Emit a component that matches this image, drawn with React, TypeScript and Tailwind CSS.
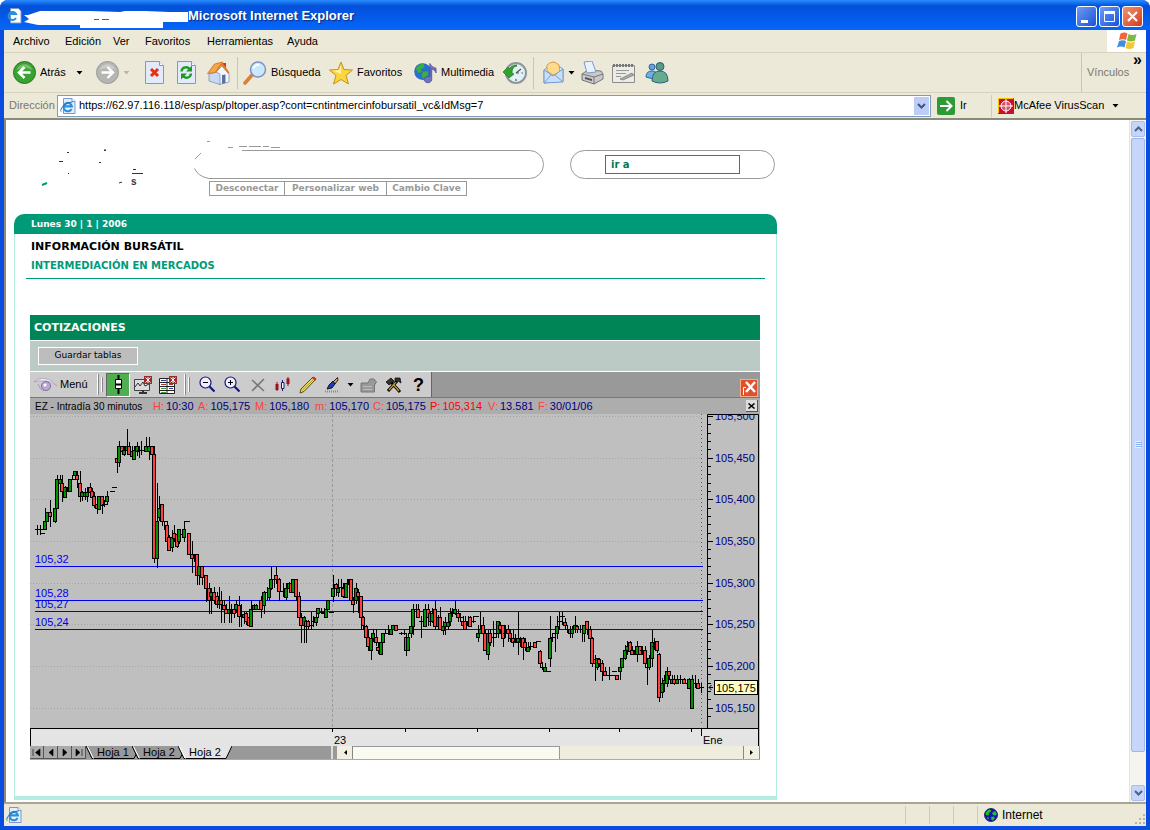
import type { ReactNode } from 'react';

type Candle = [number, number, number, number, number, string];

// x, high, body top, body bottom, low, colour (g = up, r = down, d = flat)
const candles: Candle[] = [
    [7, 115, 119, 119, 125, 'd'], [10, 115, 119, 119, 125, 'd'], [12, 123, 123, 123, 124, 'd'],
    [15, 98, 111, 119, 120, 'g'], [17, 102, 102, 111, 112, 'g'], [20, 90, 102, 106, 117, 'r'],
    [25, 98, 98, 111, 113, 'g'], [30, 65, 69, 73, 76, 'g'], [27, 65, 69, 98, 98, 'g'],
    [32, 65, 73, 81, 92, 'r'], [35, 76, 77, 87, 88, 'g'], [37, 77, 81, 81, 82, 'd'],
    [40, 69, 69, 81, 82, 'g'], [42, 65, 69, 69, 70, 'd'], [45, 61, 61, 65, 69, 'g'],
    [47, 61, 65, 69, 78, 'r'], [50, 61, 73, 86, 92, 'r'], [52, 81, 82, 86, 91, 'g'],
    [55, 78, 82, 86, 90, 'g'], [57, 77, 82, 86, 92, 'g'], [60, 73, 77, 82, 86, 'r'],
    [62, 78, 81, 87, 90, 'r'], [64, 82, 86, 95, 98, 'r'], [67, 86, 94, 98, 104, 'r'],
    [69, 86, 86, 99, 99, 'g'], [72, 86, 86, 95, 104, 'r'], [74, 90, 94, 94, 97, 'd'],
    [77, 81, 86, 91, 95, 'g'], [82, 81, 81, 81, 82, 'd'], [84, 77, 77, 77, 78, 'd'],
    [87, 44, 48, 52, 63, 'r'], [89, 31, 36, 52, 57, 'g'], [92, 36, 36, 41, 45, 'r'],
    [94, 36, 40, 44, 46, 'g'], [97, 19, 36, 40, 42, 'g'], [99, 32, 36, 44, 45, 'r'],
    [102, 36, 41, 46, 49, 'r'], [104, 36, 40, 49, 50, 'g'], [107, 32, 36, 41, 46, 'g'],
    [109, 36, 40, 40, 48, 'd'], [111, 31, 40, 40, 45, 'd'], [114, 37, 40, 40, 41, 'd'],
    [116, 27, 36, 41, 41, 'g'], [119, 27, 36, 41, 50, 'g'], [122, 36, 36, 44, 58, 'r'],
    [124, 36, 44, 148, 153, 'r'], [127, 73, 111, 148, 158, 'g'], [129, 86, 98, 107, 111, 'g'],
    [132, 94, 94, 111, 116, 'r'], [134, 111, 111, 111, 120, 'd'], [137, 111, 115, 131, 136, 'r'],
    [139, 125, 127, 140, 141, 'r'], [142, 120, 127, 137, 142, 'g'], [144, 115, 123, 128, 132, 'r'],
    [147, 120, 124, 136, 138, 'r'], [149, 119, 119, 131, 134, 'g'], [152, 122, 124, 124, 125, 'd'],
    [154, 111, 119, 127, 132, 'g'], [157, 111, 111, 111, 112, 'd'], [159, 123, 123, 144, 145, 'r'],
    [162, 131, 144, 148, 163, 'r'], [164, 144, 148, 148, 152, 'd'], [167, 144, 144, 165, 175, 'r'],
    [169, 156, 156, 165, 175, 'g'], [172, 156, 156, 167, 175, 'r'], [176, 165, 165, 178, 192, 'r'],
    [179, 173, 178, 190, 204, 'r'], [181, 178, 182, 186, 204, 'g'], [184, 177, 182, 190, 194, 'r'],
    [187, 182, 186, 194, 198, 'r'], [189, 177, 190, 194, 199, 'g'], [191, 181, 190, 194, 213, 'r'],
    [194, 190, 195, 199, 213, 'r'], [196, 194, 199, 203, 204, 'r'], [199, 186, 199, 203, 213, 'g'],
    [201, 194, 199, 203, 213, 'd'], [204, 194, 199, 203, 208, 'r'], [206, 190, 194, 199, 203, 'g'],
    [209, 186, 195, 206, 217, 'r'], [211, 194, 206, 206, 217, 'd'], [214, 202, 204, 207, 214, 'g'],
    [216, 202, 203, 211, 215, 'r'], [219, 199, 207, 215, 216, 'r'], [221, 190, 199, 216, 217, 'g'],
    [224, 194, 195, 199, 200, 'g'], [226, 194, 195, 199, 199, 'g'], [229, 190, 199, 199, 200, 'd'],
    [231, 186, 190, 199, 208, 'r'], [234, 181, 182, 195, 204, 'g'], [237, 177, 182, 182, 190, 'd'],
    [239, 173, 178, 187, 190, 'g'], [241, 156, 169, 178, 180, 'g'], [244, 165, 169, 169, 178, 'd'],
    [246, 156, 165, 169, 174, 'r'], [249, 168, 169, 181, 191, 'r'], [253, 173, 181, 181, 187, 'd'],
    [256, 173, 178, 187, 190, 'g'], [259, 172, 173, 178, 182, 'g'], [261, 172, 173, 182, 183, 'r'],
    [263, 169, 169, 182, 183, 'g'], [266, 169, 169, 186, 191, 'r'], [269, 182, 186, 207, 216, 'r'],
    [271, 203, 207, 215, 233, 'r'], [274, 206, 207, 215, 233, 'g'], [276, 210, 211, 216, 233, 'r'],
    [278, 210, 211, 216, 220, 'r'], [281, 202, 215, 215, 220, 'd'], [283, 206, 211, 211, 217, 'd'],
    [286, 202, 207, 212, 216, 'g'], [288, 198, 198, 203, 208, 'g'], [291, 198, 202, 202, 204, 'd'],
    [294, 198, 203, 203, 207, 'd'], [296, 198, 199, 207, 208, 'g'], [298, 190, 190, 199, 200, 'g'],
    [301, 202, 202, 202, 203, 'd'], [303, 165, 178, 186, 192, 'g'], [306, 173, 174, 178, 186, 'r'],
    [308, 169, 178, 182, 187, 'g'], [311, 169, 177, 177, 182, 'd'], [313, 173, 178, 186, 188, 'r'],
    [316, 173, 173, 187, 188, 'g'], [319, 169, 169, 174, 187, 'd'], [321, 169, 169, 190, 195, 'r'],
    [326, 173, 178, 190, 194, 'g'], [323, 187, 190, 194, 203, 'r'], [328, 179, 182, 186, 203, 'r'],
    [331, 186, 186, 207, 220, 'r'], [333, 206, 207, 215, 220, 'r'], [336, 215, 216, 227, 237, 'r'],
    [338, 220, 227, 236, 241, 'r'], [341, 223, 228, 240, 250, 'g'], [343, 219, 223, 228, 232, 'g'],
    [346, 219, 227, 232, 236, 'r'], [348, 232, 237, 240, 244, 'r'], [351, 228, 232, 244, 245, 'g'],
    [353, 223, 223, 232, 233, 'g'], [355, 220, 223, 223, 224, 'd'], [358, 215, 223, 223, 225, 'd'],
    [361, 218, 219, 224, 225, 'g'], [363, 215, 215, 219, 220, 'g'], [366, 215, 215, 220, 221, 'r'],
    [371, 222, 223, 223, 225, 'd'], [374, 219, 223, 223, 225, 'd'], [376, 223, 227, 240, 246, 'r'],
    [378, 223, 227, 240, 241, 'g'], [381, 215, 216, 223, 228, 'g'], [383, 194, 199, 216, 225, 'g'],
    [386, 194, 199, 199, 207, 'd'], [388, 194, 199, 207, 208, 'r'], [391, 206, 211, 211, 228, 'd'],
    [393, 203, 211, 211, 216, 'd'], [395, 194, 199, 216, 217, 'g'], [398, 194, 199, 207, 216, 'r'],
    [400, 202, 203, 211, 216, 'r'], [402, 198, 203, 211, 213, 'g'], [405, 190, 199, 216, 220, 'r'],
    [408, 205, 207, 216, 217, 'g'], [410, 197, 207, 219, 220, 'r'], [413, 211, 216, 220, 225, 'g'],
    [415, 207, 212, 216, 225, 'g'], [418, 206, 212, 216, 220, 'g'], [420, 198, 203, 211, 216, 'g'],
    [422, 198, 202, 202, 207, 'd'], [425, 190, 199, 203, 205, 'g'], [428, 199, 203, 207, 212, 'r'],
    [430, 203, 207, 207, 212, 'd'], [433, 206, 211, 215, 216, 'r'], [435, 206, 211, 219, 220, 'r'],
    [438, 206, 211, 215, 216, 'd'], [440, 206, 207, 216, 217, 'r'], [443, 206, 211, 211, 213, 'd'],
    [446, 206, 206, 206, 207, 'd'], [448, 215, 223, 227, 232, 'g'], [450, 202, 219, 223, 224, 'g'],
    [453, 207, 215, 223, 228, 'r'], [455, 220, 223, 240, 241, 'r'], [458, 220, 223, 244, 250, 'g'],
    [460, 219, 223, 232, 236, 'r'], [463, 211, 227, 227, 237, 'd'], [466, 220, 223, 223, 228, 'd'],
    [468, 211, 211, 223, 228, 'g'], [470, 212, 215, 219, 224, 'r'], [473, 215, 215, 228, 237, 'r'],
    [475, 215, 223, 223, 228, 'd'], [478, 215, 219, 223, 232, 'r'], [480, 219, 223, 228, 232, 'r'],
    [483, 219, 228, 232, 237, 'r'], [485, 224, 231, 231, 233, 'd'], [488, 202, 228, 232, 245, 'g'],
    [490, 227, 231, 231, 237, 'd'], [493, 227, 228, 237, 250, 'r'], [495, 228, 232, 237, 241, 'r'],
    [498, 232, 237, 241, 242, 'g'], [500, 232, 236, 236, 240, 'd'], [503, 232, 236, 236, 237, 'd'],
    [505, 232, 232, 237, 238, 'r'], [508, 231, 231, 231, 232, 'd'], [510, 240, 241, 253, 257, 'r'],
    [512, 252, 257, 257, 260, 'd'], [515, 253, 257, 261, 262, 'g'], [518, 261, 261, 261, 262, 'd'],
    [520, 206, 228, 248, 257, 'g'], [522, 223, 227, 227, 232, 'd'], [525, 219, 223, 223, 242, 'd'],
    [527, 206, 216, 223, 229, 'g'], [529, 202, 211, 211, 220, 'd'], [532, 202, 206, 206, 215, 'd'],
    [535, 208, 212, 215, 220, 'r'], [537, 215, 219, 219, 223, 'd'], [540, 216, 219, 223, 228, 'r'],
    [542, 216, 219, 223, 228, 'g'], [545, 206, 215, 219, 223, 'g'], [547, 215, 216, 219, 223, 'r'],
    [550, 215, 219, 219, 223, 'd'], [552, 215, 219, 219, 232, 'd'], [554, 215, 215, 223, 232, 'g'],
    [557, 211, 211, 219, 225, 'r'], [560, 216, 219, 228, 232, 'r'], [562, 227, 228, 253, 257, 'r'],
    [565, 245, 249, 253, 271, 'r'], [567, 248, 248, 257, 260, 'g'], [569, 248, 249, 253, 257, 'r'],
    [572, 250, 253, 261, 271, 'r'], [575, 257, 261, 265, 266, 'r'], [579, 257, 265, 265, 270, 'd'],
    [582, 265, 265, 265, 266, 'd'], [584, 261, 261, 261, 262, 'd'], [587, 265, 265, 269, 270, 'r'],
    [590, 252, 257, 261, 270, 'g'], [592, 248, 248, 257, 258, 'g'], [595, 235, 240, 248, 250, 'g'],
    [597, 231, 236, 240, 245, 'g'], [600, 231, 232, 241, 245, 'r'], [602, 236, 240, 244, 245, 'r'],
    [605, 236, 240, 244, 245, 'd'], [607, 231, 236, 244, 252, 'g'], [610, 236, 236, 244, 245, 'r'],
    [612, 236, 240, 240, 245, 'd'], [615, 236, 240, 253, 257, 'r'], [617, 252, 257, 257, 275, 'd'],
    [619, 245, 248, 257, 260, 'g'], [622, 220, 232, 248, 257, 'g'], [624, 228, 236, 236, 240, 'd'],
    [627, 231, 231, 240, 243, 'r'], [629, 243, 244, 287, 292, 'r'], [632, 268, 273, 282, 288, 'g'],
    [634, 265, 270, 273, 282, 'g'], [637, 257, 261, 273, 277, 'g'], [639, 261, 261, 265, 270, 'r'],
    [642, 265, 269, 273, 274, 'g'], [644, 265, 269, 273, 275, 'r'], [647, 265, 269, 273, 274, 'g'],
    [650, 265, 269, 269, 274, 'd'], [654, 268, 269, 273, 274, 'r'], [657, 269, 273, 273, 278, 'd'],
    [659, 268, 269, 278, 279, 'g'], [662, 265, 269, 298, 299, 'g'], [665, 265, 273, 273, 278, 'd'],
    [668, 269, 273, 278, 279, 'r'], [671, 273, 277, 277, 283, 'd'],
];

const levels = [
    { label: '105,32', y: 152, text: 149 },
    { label: '105,28', y: 186, text: 183 },
    { label: '105,27', y: 197, text: 194 },
    { label: '105,24', y: 215, text: 212 },
];

const prices = ['105,500', '105,450', '105,400', '105,350', '105,300', '105,250', '105,200', '105,150'];
const minorTicks = Array.from({ length: 37 }, (_, i) => 2 + Math.round((i * 25) / 3));
const dayTicks = [302, 375, 447, 519, 589, 661];

const quote = [
    { k: 'H:', v: '10:30', w: 'w-[45px]' },
    { k: 'A:', v: '105,175', w: 'w-[57px]' },
    { k: 'M:', v: '105,180', w: 'w-[60px]' },
    { k: 'm:', v: '105,170', w: 'w-[58px]' },
    { k: 'C:', v: '105,175', w: 'w-[57px]' },
    { k: 'P:', v: '105,314', w: 'w-[58px]' },
    { k: 'V:', v: '13.581', w: 'w-[50px]' },
    { k: 'F:', v: '30/01/06', w: 'w-[60px]' },
];

const menu = [
    { label: 'Archivo', w: 'w-[52px]' },
    { label: 'Edición', w: 'w-12' },
    { label: 'Ver', w: 'w-8' },
    { label: 'Favoritos', w: 'w-[62px]' },
    { label: 'Herramientas', w: 'w-20' },
    { label: 'Ayuda', w: 'w-12' },
];

function Caret({ muted }: { muted?: boolean }) {
    return (
        <svg width="7" height="4" viewBox="0 0 7 4" className="shrink-0">
            <path d="M0.5 0h6L3.5 3.5z" fill={muted ? '#b8b5a8' : '#000'} />
        </svg>
    );
}

function IePage() {
    return (
        <svg width="16" height="16" viewBox="0 0 16 16" className="shrink-0">
            <path d="M3.5 0.5h8.5l3 3v12h-11.5z" fill="#e4eefb" stroke="#7d97c8" />
            <path d="M12 0.5v3h3" fill="#fff" stroke="#7d97c8" />
            <path d="M11.5 11a4.2 4.2 0 1 1 0.4-2.6H4.5" fill="none" stroke="#2a8fd8" strokeWidth="2.1" />
            <path d="M1 13.5C-0.5 11 5 4.5 12.5 4" fill="none" stroke="#1f6fb5" strokeWidth="1" />
        </svg>
    );
}

function Globe() {
    return (
        <svg width="14" height="14" viewBox="0 0 14 14" className="shrink-0">
            <circle cx="7" cy="7" r="6.5" fill="#1414b8" stroke="#0a1450" strokeWidth="0.8" />
            <path d="M2 4l3-2.5 2.500 0.8L6 4.5 4.5 5 5 7 2.800 7.5 1.5 6zM8 5l3-2 2 3-1.500 1.500L9 7zM7 9l2.500-0.500L11 10 9 12.500 7.500 12zM3 9l1.500 0.500L5 11.500 3.500 11z" fill="#1fc41f" />
        </svg>
    );
}

function ArrowCircle({ forward }: { forward?: boolean }) {
    return (
        <svg width="23" height="23" viewBox="0 0 23 23">
            <circle cx="11.5" cy="11.5" r="11" fill={forward ? '#b5b5b1' : '#38a330'} stroke={forward ? '#9a9a96' : '#1f7a1c'} />
            <path d="M3.5 9a8.5 8.5 0 0 1 16 0q-8-4-16 0z" fill="#fff" opacity="0.3" />
            {forward ? (
                <path d="M5.5 11.5h11M11.5 6l5.5 5.5-5.5 5.5" fill="none" stroke="#fff" strokeWidth="2.4" />
            ) : (
                <path d="M17.5 11.5h-11M11.5 6L6 11.5l5.5 5.5" fill="none" stroke="#fff" strokeWidth="2.6" />
            )}
        </svg>
    );
}

function Tool({ label, width, children }: { label: string; width: string; children: ReactNode }) {
    return (
        <button type="button" aria-label={label} className={`${width} h-full shrink-0 flex items-center gap-1 text-left whitespace-nowrap`}>
            {children}
        </button>
    );
}

function BrowserToolbar() {
    return (
        <div className="h-10 flex items-center pl-[9px] bg-[#ece9d8] border-b border-[#d8d2bd]">
            <Tool label="Atrás" width="w-[83px]">
                <ArrowCircle />
                <span className="w-8">Atrás</span>
                <Caret />
            </Tool>
            <Tool label="Adelante" width="w-[49px]">
                <ArrowCircle forward />
                <Caret muted />
            </Tool>
            <Tool label="Detener" width="w-8">
                <svg width="19" height="23" viewBox="0 0 19 23">
                    <path d="M0.5 0.5h14l4 4v18h-18z" fill="#e1ebfc" stroke="#8097cc" />
                    <path d="M14.5 0.5v4h4" fill="#fff" stroke="#8097cc" />
                    <path d="M6 8l7 7M13 8l-7 7" stroke="#e8300e" strokeWidth="3" />
                </svg>
            </Tool>
            <Tool label="Actualizar" width="w-[30px]">
                <svg width="19" height="23" viewBox="0 0 19 23">
                    <path d="M0.5 0.5h14l4 4v18h-18z" fill="#e1ebfc" stroke="#8097cc" />
                    <path d="M14.5 0.5v4h4" fill="#fff" stroke="#8097cc" />
                    <path d="M4.5 10.5c0.5-5 6-5 8-2.5M14 12.5c-0.5 5-6 5-8 2.5" fill="none" stroke="#1f9a1d" strokeWidth="2.4" />
                    <path d="M15 4.500v6h-6zM4 18.500v-6h6z" fill="#1f9a1d" />
                </svg>
            </Tool>
            <Tool label="Inicio" width="w-[30px]">
                <svg width="23" height="24" viewBox="0 0 23 24">
                    <path d="M16 2h3v6h-3z" fill="#c03a1c" />
                    <path d="M9 11l6-6 7 8v8l-10 2.5z" fill="#f4f7ff" stroke="#7f92bb" strokeWidth="0.8" />
                    <path d="M2 13l7-2 4 2v10.5L2 20z" fill="#c9d8f5" stroke="#7f92bb" strokeWidth="0.8" />
                    <path d="M0.5 12.5L7.5 3l8-2-7 10.5z" fill="#f5a64a" stroke="#c96f20" strokeWidth="0.8" />
                    <path d="M15 1l7.500 10.500-1.500 1L14.500 4.500 9 12l-1-1z" fill="#e07d2a" />
                    <path d="M15 14l3.5-0.500V22l-3.500 0.800z" fill="#5d6f9c" />
                </svg>
            </Tool>
            <span className="w-px h-8 bg-[#c9c5b2] mr-[5px]" />
            <Tool label="Búsqueda" width="w-[86px]">
                <svg width="24" height="24" viewBox="0 0 24 24">
                    <path d="M2 22l7-8" stroke="#d98236" strokeWidth="3.6" strokeLinecap="round" />
                    <circle cx="15" cy="8.5" r="7.5" fill="#c9e8fb" stroke="#7c93c4" strokeWidth="1.5" />
                    <path d="M10.5 7.5a5 5 0 0 1 6-3.5" fill="none" stroke="#fff" strokeWidth="2" />
                </svg>
                Búsqueda
            </Tool>
            <Tool label="Favoritos" width="w-[85px]">
                <svg width="24" height="24" viewBox="0 0 24 24">
                    <path d="M12 1l3 7.500 8.500 0.500-6.500 5.500 2.500 8.500-7.500-4.500-7.500 4.500 2.500-8.500L0.500 9 9 8.500z" fill="#fbd63c" stroke="#c8901a" />
                    <path d="M12 4v9l-8-3.5 6-0.5z" fill="#fff3a6" />
                </svg>
                Favoritos
            </Tool>
            <Tool label="Multimedia" width="w-[89px]">
                <svg width="23" height="22" viewBox="0 0 24 22">
                    <circle cx="9" cy="9.5" r="8.8" fill="#2a6fd0" />
                    <path d="M2 6q3-5 8-5l1 4-4 2 1 3-4 1zM9 10l5-1 1 4-4 5-3-3z" fill="#3cae3c" />
                    <path d="M16.5 15V1q1.500 4 6.500 5v5q-1-4-4.500-4V18a4 3.300 0 1 1-2-3z" fill="#7173c0" stroke="#3e3f8e" strokeWidth="0.7" />
                </svg>
                Multimedia
            </Tool>
            <Tool label="Historial" width="w-[30px]">
                <svg width="24" height="24" viewBox="0 0 24 24">
                    <circle cx="13" cy="12" r="10" fill="#dff0f6" stroke="#8d959b" strokeWidth="2" />
                    <path d="M13 12l5-4M13 12h3M13 4v2M20 12h-1.5M13 20v-2" stroke="#555" strokeWidth="1.2" />
                    <path d="M0 11l5-5 1 2c2-3 5-4 8-4-4 2-5 5-5 8l2 1-5 4z" fill="#2fa32b" stroke="#1d7a1b" strokeWidth="0.7" />
                </svg>
            </Tool>
            <span className="w-px h-8 bg-[#c9c5b2] mr-[9px]" />
            <Tool label="Correo" width="w-[38px]">
                <svg width="21" height="23" viewBox="0 0 21 23">
                    <path d="M1 9l9-8 10 7v12l-19 2z" fill="#dcebfb" stroke="#7d98cc" />
                    <path d="M4 4q6-6 12 0l1 7-7 3-6-4z" fill="#ffd98c" stroke="#d99d46" />
                    <path d="M1 9l9 6 10-7v13l-19 1z" fill="#c7e0f9" stroke="#7d98cc" />
                    <path d="M1 22l7-8M20 21l-8-7" stroke="#7d98cc" />
                </svg>
                <Caret />
            </Tool>
            <Tool label="Imprimir" width="w-[31px]">
                <svg width="23" height="24" viewBox="0 0 23 24">
                    <path d="M1 13l6-4 13 1 2 3v5l-9 5-12-4z" fill="#c9c9c9" stroke="#777" />
                    <path d="M3 1l8-1 4 11-9 1z" fill="#e8f1ff" stroke="#8397c5" />
                    <path d="M1 13l12 3 9-3M13 16v7" fill="none" stroke="#777" />
                    <path d="M4 16l7 2v2l-7-2z" fill="#555" />
                </svg>
            </Tool>
            <Tool label="Modificar" width="w-[33px]">
                <svg width="24" height="20" viewBox="0 0 24 20">
                    <path d="M0.5 2.5h22v17h-22z" fill="#ecebe6" stroke="#8d8c88" />
                    <path d="M1 2.5h21" stroke="#777" strokeWidth="3" strokeDasharray="2 1" />
                    <path d="M4 7.500h13M4 10.500h10M4 13.500h5" stroke="#999" />
                    <path d="M8 16l12-6 2 2-11 5z" fill="#aaa" stroke="#777" strokeWidth="0.7" />
                </svg>
            </Tool>
            <Tool label="Messenger" width="w-6">
                <svg width="24" height="22" viewBox="0 0 24 22">
                    <circle cx="7" cy="5" r="3" fill="#62a6dc" stroke="#2f64a0" />
                    <path d="M1 15q0-6 6-6t5 6q-5 3-11 0z" fill="#6eb0e2" stroke="#2f64a0" />
                    <circle cx="15" cy="4.5" r="4" fill="#5a9a86" stroke="#2d5d6e" />
                    <path d="M7 19q0-10 8-10t8 10q-8 4-16 0z" fill="#64ac8c" stroke="#2d5d8e" />
                </svg>
            </Tool>
            <div className="ml-auto flex self-stretch items-center w-[65px] pl-[5px] border-l border-[#c9c5b2] text-[#7a786c]">
                Vínculos
                <span className="ml-auto mr-1 self-start leading-[14px] text-base font-bold text-black">»</span>
            </div>
        </div>
    );
}

function TitleBar() {
    return (
        <header className="h-[30px] flex items-center rounded-t-lg pr-[7px] pt-[2px] bg-linear-to-b from-[#2a8cff] via-[#0450d8] via-20% to-[#0566fb]">
            <svg width="188" height="28" viewBox="0 2 188 28" className="shrink-0">
                <path d="M10.5 8.500h8l2.500 2.500v12H10.500z" fill="#fff" stroke="#7d97c8" />
                <path d="M16 18a4 4 0 1 1 0-4H8.5" fill="none" stroke="#2a8fd8" strokeWidth="2" />
                <path d="M24 15h4l12-4h50l30 1 5-1h20l24 1h21v10h-27v6H80v-3H38l-14-3 5-3z" fill="#fff" />
                <path d="M94 19.500h5M102 19.500h7" stroke="#3b62a8" />
            </svg>
            <h1 className="font-bold text-[13px] text-white whitespace-nowrap [text-shadow:1px_1px_1px_#0a2a80]">Microsoft Internet Explorer</h1>
            <div className="ml-auto flex gap-[2px]">
                <button type="button" aria-label="Minimizar" className="size-[21px] rounded-[3px] border border-white bg-linear-to-br from-[#6c9bf5] to-[#1c4fd6]">
                    <svg width="19" height="19"><path d="M4 13h7v3H4z" fill="#fff" /></svg>
                </button>
                <button type="button" aria-label="Maximizar" className="size-[21px] rounded-[3px] border border-white bg-linear-to-br from-[#6c9bf5] to-[#1c4fd6]">
                    <svg width="19" height="19"><path d="M4.5 5.500h10v9h-10z" fill="none" stroke="#fff" /><path d="M4 5.5h11" stroke="#fff" strokeWidth="3" /></svg>
                </button>
                <button type="button" aria-label="Cerrar" className="size-[21px] rounded-[3px] border border-white bg-linear-to-br from-[#f0926e] to-[#d2361a]">
                    <svg width="19" height="19"><path d="M5 5l9 9M14 5l-9 9" stroke="#fff" strokeWidth="2.2" /></svg>
                </button>
            </div>
        </header>
    );
}

function MenuBar() {
    return (
        <nav className="h-[23px] flex items-center bg-[#ece9d8] border-b border-[#d8d2bd] pl-[9px]">
            {menu.map((item) => (
                <button key={item.label} type="button" className={`${item.w} text-left`}>{item.label}</button>
            ))}
            <div className="ml-auto w-[39px] h-[22px] bg-white flex items-center justify-center">
                <svg width="20" height="18" viewBox="0 0 20 18">
                    <path d="M3.500 1.500q4-2 7 0L9 8q-3-1.500-7 0z" fill="#f0643c" />
                    <path d="M11.500 2q4 2 8 0L18 8.500q-4 2-8 0z" fill="#7cb93c" />
                    <path d="M2 9q4-1.500 7 0l-1.500 6.500q-3-2-7.500 0z" fill="#3f8fe0" />
                    <path d="M10 9.500q4 2 8 0L16.500 16q-4 2-8 0z" fill="#f7c531" />
                </svg>
            </div>
        </nav>
    );
}

function AddressBar() {
    return (
        <div className="h-[27px] flex items-center bg-[#ece9d8] border-b-2 border-[#8c8a78] pl-[5px]">
            <label htmlFor="address" className="w-12 shrink-0 text-[#7a786c]">Dirección</label>
            <div className="flex-1 h-[22px] flex items-center bg-white border border-[#7f9db9] pl-[2px] pr-px">
                <IePage />
                <input
                    id="address"
                    type="text"
                    defaultValue="https://62.97.116.118/esp/asp/pltoper.asp?cont=cntintmercinfobursatil_vc&IdMsg=7"
                    className="flex-1 min-w-0 px-[3px] focus:outline-none"
                />
                <button type="button" aria-label="Desplegar" className="w-[15px] h-[18px] flex items-center justify-center bg-[#bccdf8]">
                    <svg width="9" height="6" viewBox="0 0 9 6"><path d="M1 1l3.500 3.500L8 1" fill="none" stroke="#3f5582" strokeWidth="2" /></svg>
                </button>
            </div>
            <button type="button" className="w-[60px] flex items-center gap-[5px] pl-[6px] shrink-0">
                <svg width="18" height="18" viewBox="0 0 18 18">
                    <rect width="18" height="18" rx="2" fill="#2e9a33" />
                    <path d="M3 9h11M9.5 4L14.5 9l-5 5" fill="none" stroke="#fff" strokeWidth="2" />
                </svg>
                Ir
            </button>
            <button type="button" className="w-[155px] h-[22px] flex items-center pl-[6px] shrink-0 border-l border-[#d0ccb8] text-left whitespace-nowrap">
                <svg width="16" height="16" viewBox="0 0 16 16">
                    <rect width="16" height="16" fill="#c8102e" />
                    <path d="M0 0.5h15.5M0.5 0v15" stroke="#f2c500" />
                    <circle cx="8" cy="8" r="5" fill="#d9506a" stroke="#fff" />
                    <path d="M8 1v14M1 8h14" stroke="#fff" />
                </svg>
                <span className="w-[98px]">McAfee VirusScan</span>
                <Caret />
            </button>
        </div>
    );
}

function PageHeader() {
    return (
        <div className="flex items-start pt-5 h-[94px]">
            <svg width="180" height="60" viewBox="0 0 180 60" className="shrink-0">
                <path d="M53 12.5h2M45 21.5h4M90 10.5h2M91 9v2M85 22.5h2M54 33.5h1M118 33.5h11M119 29.5h3M105 43l3-1" stroke="#333" fill="none" />
                <path d="M28 45l5-2" stroke="#00996f" strokeWidth="2" />
                <text x="117" y="45" fontSize="10" fontWeight="bold" fill="#333" fontFamily="Liberation Sans, sans-serif">s</text>
            </svg>
            <div className="flex flex-col">
                <svg width="350" height="40" viewBox="0 0 350 40">
                    <path d="M48 10.5h287.5a14 14 0 0 1 0 28H15q-11-2-14.5-10M1 19l6-6M13 1.5h3M34 7.5h5M45 6.5h8M55 6.5h12M69 6.5h6M77 7.5h9" stroke="#999" fill="none" />
                </svg>
                <nav className="ml-[15px] mt-px w-[258px] h-[15px] flex border border-[#999] text-[9px] leading-[13px] font-bold font-['DejaVu_Sans',sans-serif] text-[#999] text-center whitespace-nowrap">
                    <a href="#desconectar" className="w-[75px] border-r border-[#999]">Desconectar</a>
                    <a href="#personalizar" className="w-[102px] border-r border-[#999]">Personalizar web</a>
                    <a href="#clave" className="flex-1">Cambio Clave</a>
                </nav>
            </div>
            <div className="ml-[26px] mt-[10px] w-[205px] h-[29px] shrink-0 flex items-center pl-[34px] border border-[#999] rounded-full">
                <input
                    type="text"
                    aria-label="ir a"
                    defaultValue="ir a"
                    className="w-[135px] h-[19px] px-[5px] border border-[#00966f] text-[10px] font-bold font-['DejaVu_Sans',sans-serif] text-[#007a55] focus:outline-none"
                />
            </div>
        </div>
    );
}

function ChartTool({ label, children }: { label: string; children: ReactNode }) {
    return (
        <button type="button" aria-label={label} className="w-[25px] h-[25px] shrink-0 flex items-center justify-center">
            {children}
        </button>
    );
}

function Grip() {
    return (
        <span className="flex gap-[2px] w-[7px] shrink-0">
            <span className="w-[2px] h-[21px] bg-white border-r border-[#888]" />
            <span className="w-[2px] h-[15px] mt-[3px] bg-white border-r border-[#888]" />
        </span>
    );
}

function ChartToolbar() {
    return (
        <div className="h-[26px] flex bg-[#999] border-b border-[#777]">
            <div className="w-[402px] flex items-center bg-[#ccc] border-r border-[#666]">
                <button type="button" className="w-[67px] flex items-center pl-1 gap-[2px]">
                    <svg width="24" height="16" viewBox="0 0 24 16">
                        <path d="M0 5q6-5 12-3 7 1 11 7-6-5-11-5Q5 3 0 5z" fill="#f4f0fa" stroke="#a596bd" strokeWidth="0.7" />
                        <circle cx="12" cy="9" r="4.5" fill="#b9a9d3" stroke="#7e6c9f" />
                        <circle cx="11" cy="8" r="1.5" fill="#fff" />
                        <path d="M4 7q2 6 6 7" fill="none" stroke="#a596bd" />
                    </svg>
                    <span className="text-[11px]">Menú</span>
                </button>
                <Grip />
                <button type="button" aria-label="Velas" className="w-6 h-6 ml-[2px] flex items-center justify-center bg-[#4fae4f] border border-[#666] border-r-white border-b-white shrink-0">
                    <svg width="9" height="19" viewBox="0 0 9 19">
                        <path d="M4.5 0v19" stroke="#000" strokeWidth="2" />
                        <path d="M1.5 4.5h6v9h-6z" fill="#fff" stroke="#000" />
                        <path d="M1 9.5h7" stroke="#000" strokeWidth="2" />
                    </svg>
                </button>
                <ChartTool label="Cerrar gráfico">
                    <svg width="18" height="18" viewBox="0 0 18 18">
                        <path d="M0.5 3.5h15v11h-15z" fill="#ddd" stroke="#444" />
                        <path d="M1 11l3-4 2 3 3-4 2 4 4-2" fill="none" stroke="#333" />
                        <path d="M5 17h8M9 14v3" stroke="#333" strokeWidth="2" />
                        <path d="M10 0h8v8h-8z" fill="#9b2b2b" />
                        <path d="M11.500 1.500l5 5M16.500 1.500l-5 5M14 1v6" stroke="#fff" />
                    </svg>
                </ChartTool>
                <ChartTool label="Cerrar tabla">
                    <svg width="18" height="18" viewBox="0 0 18 18">
                        <path d="M0.5 2.5h15v15h-15z" fill="#fff" stroke="#222" />
                        <path d="M0 6.5h16M0 10.5h16M0 14.5h16M8 2v16" stroke="#222" />
                        <path d="M2 4.5h5M10 12.5h4" stroke="#33a" />
                        <path d="M2 8.5h5M10 8.5h4" stroke="#a33" />
                        <path d="M2 12.5h5M2 16.5h5" stroke="#393" />
                        <path d="M10 0h8v8h-8z" fill="#9b2b2b" />
                        <path d="M11.500 1.500l5 5M16.500 1.500l-5 5M14 1v6" stroke="#fff" />
                    </svg>
                </ChartTool>
                <span className="w-1" />
                <Grip />
                <span className="w-1" />
                <ChartTool label="Alejar">
                    <svg width="17" height="17" viewBox="0 0 17 17">
                        <circle cx="6.5" cy="6.5" r="5.5" fill="#eef" stroke="#15157d" strokeWidth="1.2" />
                        <path d="M10.5 10.5l5 5" stroke="#15157d" strokeWidth="2.2" />
                        <path d="M4 6.5h5" stroke="#000" />
                    </svg>
                </ChartTool>
                <ChartTool label="Acercar">
                    <svg width="17" height="17" viewBox="0 0 17 17">
                        <circle cx="6.5" cy="6.5" r="5.5" fill="#eef" stroke="#15157d" strokeWidth="1.2" />
                        <path d="M10.5 10.5l5 5" stroke="#15157d" strokeWidth="2.2" />
                        <path d="M4 6.5h5M6.5 4v5" stroke="#000" />
                    </svg>
                </ChartTool>
                <ChartTool label="Borrar">
                    <svg width="14" height="14" viewBox="0 0 14 14"><path d="M1 2l12 11M13 1L1 13" stroke="#777" strokeWidth="1.6" /></svg>
                </ChartTool>
                <ChartTool label="Estudios">
                    <svg width="15" height="15" viewBox="0 0 15 15">
                        <path d="M2 5v9M13 0v9" stroke="#8b1020" />
                        <path d="M0.5 7h3v6h-3zM11.5 1.5h3V7h-3z" fill="#a01020" />
                        <path d="M7.5 3v11" stroke="#15157d" />
                        <path d="M6.500 5.5h2.500v6H6.500z" fill="#fff" stroke="#15157d" />
                    </svg>
                </ChartTool>
                <ChartTool label="Lápiz">
                    <svg width="18" height="18" viewBox="0 0 18 18">
                        <path d="M1 17l1-4L14 1l3 2L5 15.5z" fill="#f0dd55" stroke="#554c14" />
                        <path d="M13 2l3 3 1.500-2-2-2z" fill="#c33" />
                        <path d="M3.5 14L15 3" stroke="#a6962c" />
                    </svg>
                </ChartTool>
                <ChartTool label="Pluma">
                    <svg width="15" height="16" viewBox="0 0 15 16">
                        <path d="M12.500 0.5L8 5l2 2 3-4z" fill="#e0a63c" stroke="#000" strokeWidth="0.8" />
                        <path d="M8 4L4 8l-2 4 5-1 3-4z" fill="#1a3dc0" stroke="#000" strokeWidth="0.8" />
                        <path d="M0 14.5h13" stroke="#888" strokeDasharray="1 1" strokeWidth="2" />
                    </svg>
                </ChartTool>
                <span className="w-[11px] flex justify-center"><Caret /></span>
                <ChartTool label="Carpeta">
                    <svg width="17" height="16" viewBox="0 0 17 16">
                        <path d="M1 6h7l2-4h4l2.500 3-2 3v7H1z" fill="#999" stroke="#777" />
                        <path d="M3 9.500h9M3 12.500h9" stroke="#bbb" />
                    </svg>
                </ChartTool>
                <ChartTool label="Herramientas">
                    <svg width="17" height="16" viewBox="0 0 17 16">
                        <path d="M3 14L12 4M15 15L6 5" stroke="#000" strokeWidth="3" />
                        <path d="M4 13l7-8M14 14L8 7" stroke="#c09a30" strokeWidth="1.3" />
                        <path d="M1 5l5-4 3 3-5 4zM10 1h5l1 5-3-2-3 1z" fill="#333" stroke="#000" strokeWidth="0.7" />
                    </svg>
                </ChartTool>
                <ChartTool label="Ayuda">
                    <span className="text-lg font-bold">?</span>
                </ChartTool>
            </div>
            <button type="button" aria-label="Cerrar sesión" className="ml-auto self-end size-[18px] mr-[2px] bg-[#e0502a] border border-[#f5b08a]">
                <svg width="16" height="16" viewBox="0 0 16 16">
                    <path d="M5 2l9 10M14 2l-9 10" stroke="#fff" strokeWidth="2.5" />
                    <path d="M2.5 15V7.5H5" fill="none" stroke="#fff" />
                </svg>
            </button>
        </div>
    );
}

function Chart() {
    return (
        <svg width="730" height="332" viewBox="0 0 730 332" className="block max-w-full font-['Liberation_Sans',Arial,sans-serif] text-[11px]">
            <rect width="730" height="332" fill="#bfbfbf" />
            <rect y="315" width="728" height="17" fill="#e4e4e4" />
            {prices.map((p, i) => (
                <path key={p} d={`M0 ${2.5 + Math.round((i * 125) / 3)}h672`} stroke="#a6a6a6" strokeDasharray="1 2" />
            ))}
            <path d="M302.5 0v314" stroke="#999" strokeDasharray="3 2" />
            <path d="M671.5 0v310" stroke="#555" strokeDasharray="1 3" />
            {levels.map((l) => (
                <g key={l.label}>
                    <path d={`M5 ${l.y + 0.5}h668`} stroke="#0000f0" />
                    <text x="5" y={l.text} fill="#0000f0">{l.label}</text>
                </g>
            ))}
            <g transform="translate(0 -4)" shapeRendering="crispEdges">
                {candles.map(([x, high, top, bottom, low, c]) => (
                    <g key={x} stroke="#000">
                        <path d={`M${x + 0.5} ${high}V${low}`} />
                        {bottom === top ? (
                            <path d={`M${x - 2} ${top + 0.5}h5`} />
                        ) : (
                            <rect x={x - 1.5} y={top + 0.5} width="3" height={bottom - top} fill={c === 'r' ? '#ff4040' : c === 'g' ? '#009400' : '#000'} />
                        )}
                    </g>
                ))}
            </g>
            <g stroke="#000" fill="none">
                <path d="M677.5 315V0.5h51V332M0 314.5h729M0.5 314v18M671.5 314v8" />
                {minorTicks.map((y) => <path key={y} d={`M678 ${y + 0.5}h3`} />)}
                {prices.map((p, i) => <path key={p} d={`M678 ${2.5 + Math.round((i * 125) / 3)}h5`} />)}
                {dayTicks.map((x) => <path key={x} d={`M${x + 0.5} 314v4`} />)}
            </g>
            {prices.map((p, i) => (
                <text key={p} x="685" y={6 + Math.round((i * 125) / 3)} fill="#000080">{p}</text>
            ))}
            <rect x="684.5" y="266.5" width="43" height="14" fill="#ffffc4" stroke="#000" />
            <text x="686" y="278">105,175</text>
            <path d="M679 273.5h4M681.5 271l-2.500 2.500 2.500 2.500" stroke="#000" fill="none" />
            <text x="304" y="330">23</text>
            <text x="673" y="330">Ene</text>
        </svg>
    );
}

const navPaths = ['M1 1v7M8 1v7L3.5 4.5z', 'M7 1v7L3 4.5z', 'M3 1v7L7 4.5z', 'M2 1v7L6 4.5zM8 1v7'];

function SheetTabs() {
    return (
        <div className="h-[14px] flex bg-[#999] border-b border-[#aaa] text-[11px] leading-[13px]">
            <div className="w-[301px] flex shrink-0">
                {navPaths.map((d) => (
                    <button key={d} type="button" aria-label="Mover hoja" className="w-[14px] h-[13px] flex items-center justify-center bg-[#aaa] border-r border-b border-[#555]">
                        <svg width="9" height="9"><path d={d} fill="#000" stroke="#000" strokeWidth="0.6" /></svg>
                    </button>
                ))}
                {['#999', '#999', '#e4e4e4'].map((fill, i) => (
                    <button key={i} type="button" className="relative w-[46px] h-[13px] pl-2">
                        <svg width="54" height="13" viewBox="0 0 54 13" className="absolute left-0 top-0">
                            <path d="M0 0l6 12.5h42L54 0z" fill={fill} />
                            <path d="M0 0l6 12.5h42L54 0" fill="none" stroke="#000" />
                            <path d="M1.5 0.5l6 12" stroke="#fff" />
                        </svg>
                        <span className="relative whitespace-nowrap">{i === 0 ? 'Hoja 1' : 'Hoja 2'}</span>
                    </button>
                ))}
            </div>
            <span className="w-[6px] bg-[#999] border-l-2 border-[#ddd]" />
            <button type="button" aria-label="Izquierda" className="w-4 flex items-center justify-center bg-[#f1efe2] border-r border-[#888]">
                <svg width="4" height="5"><path d="M4 0v5L1 2.5z" /></svg>
            </button>
            <div className="flex-1 flex bg-[#efeddd]">
                <span className="w-[207px] bg-[#fbfaf0] border-t border-r border-[#999]" />
            </div>
            <button type="button" aria-label="Derecha" className="w-[17px] flex items-center justify-center bg-[#f1efe2] border-x border-[#888]">
                <svg width="4" height="5"><path d="M0 0v5L3 2.5z" /></svg>
            </button>
        </div>
    );
}

function Quotes() {
    return (
        <section className="ml-[15px] mr-4 mt-9">
            <h3 className="h-[25px] leading-[25px] pl-1 bg-[#008556] text-white text-[11px] font-bold font-['DejaVu_Sans',sans-serif]">COTIZACIONES</h3>
            <div className="h-8 flex items-center pl-2 bg-[#bccac5] border-y border-white">
                <button type="button" className="w-[100px] h-[18px] bg-[#bdbdbd] border border-white text-[9px] font-['DejaVu_Sans',sans-serif]">Guardar tablas</button>
            </div>
            <ChartToolbar />
            <div className="h-4 flex items-center pl-[5px] pr-[2px] bg-[#adadad] text-[11px] whitespace-nowrap">
                <span className="w-[118px] text-[10px]">EZ - Intradía 30 minutos</span>
                {quote.map((q) => (
                    <span key={q.k} className={`${q.w} flex gap-[2px]`}>
                        <span className={q.k === 'P:' ? 'text-[#f00]' : 'text-[#ff4040]'}>{q.k}</span>
                        <span className={q.k === 'P:' ? 'text-[#f00]' : 'text-[#000080]'}>{q.v}</span>
                    </span>
                ))}
                <button type="button" aria-label="Cerrar valor" className="ml-auto w-3 h-3 flex items-center justify-center bg-[#ddd] border-r border-b border-[#555]">
                    <svg width="7" height="6"><path d="M0.5 0.5l6 5M6.500 0.5l-6 5" stroke="#000" strokeWidth="1.5" /></svg>
                </button>
            </div>
            <Chart />
            <SheetTabs />
        </section>
    );
}

function ScrollBar() {
    return (
        <div className="w-[17px] shrink-0 flex flex-col bg-[#f5f4ee] border-l border-[#e6e4da]">
            <button type="button" aria-label="Subir" className="h-4 m-px flex items-center justify-center rounded-xs bg-[#c6d5fa] border border-[#a9bdf0]">
                <svg width="9" height="6" viewBox="0 0 9 6"><path d="M1 5l3.500-3.500L8 5" fill="none" stroke="#4d6185" strokeWidth="2" /></svg>
            </button>
            <div className="flex-1 mx-px flex items-center justify-center rounded-xs bg-[#c6d5fa] border border-[#9fb5ee]">
                <svg width="7" height="8"><path d="M0 0.5h6M0 2.5h6M0 4.5h6M0 6.5h6" stroke="#eef4fe" /><path d="M1 1.5h6M1 3.5h6M1 5.5h6" stroke="#8cb0f8" /></svg>
            </div>
            <div className="h-8" />
            <button type="button" aria-label="Bajar" className="h-4 m-px flex items-center justify-center rounded-xs bg-[#c6d5fa] border border-[#a9bdf0]">
                <svg width="9" height="6" viewBox="0 0 9 6"><path d="M1 1l3.500 3.500L8 1" fill="none" stroke="#4d6185" strokeWidth="2" /></svg>
            </button>
        </div>
    );
}

export default function App() {
    return (
        <div className="min-h-screen flex flex-col rounded-t-lg bg-[#0a4be0] font-['Liberation_Sans',Arial,sans-serif] text-[11px] text-black">
            <TitleBar />
            <div className="flex-1 flex flex-col mx-1 mb-1">
                <MenuBar />
                <BrowserToolbar />
                <AddressBar />

                <div className="flex-1 flex bg-white border-l-2 border-[#8c8a78]">
                    <main className="flex-1 min-w-0 pl-2 pb-[2px]">
                        <PageHeader />
                        <div className="w-full max-w-[763px]">
                            <div className="h-5 leading-5 pl-[17px] rounded-t-[10px] bg-[#009a78] text-white text-[9px] font-bold font-['DejaVu_Sans',sans-serif]">
                                Lunes 30 | 1 | 2006
                            </div>
                            <div className="border-x border-b-4 border-[#b5ece2] pt-1 pb-9">
                                <div className="mx-[11px] h-[41px] pl-[5px] border-b border-[#009a78] font-bold font-['DejaVu_Sans',sans-serif]">
                                    <h2 className="text-[11px] leading-[18px]">INFORMACIÓN BURSÁTIL</h2>
                                    <p className="text-[10px] leading-[19px] text-[#009a78]">INTERMEDIACIÓN EN MERCADOS</p>
                                </div>
                                <Quotes />
                            </div>
                        </div>
                    </main>
                    <ScrollBar />
                </div>

                <footer className="h-6 flex items-center bg-[#ece9d8] border-t-2 border-[#a8a594] pl-[2px] text-[12px]">
                    <IePage />
                    <div className="ml-auto flex h-[18px]">
                        <span className="w-6 border-l border-[#cfcbb8]" />
                        <span className="w-6 border-l border-[#cfcbb8]" />
                        <span className="w-6 border-l border-[#cfcbb8]" />
                        <span className="w-[157px] flex items-center gap-1 pl-[6px] border-l border-[#cfcbb8]">
                            <Globe />
                            Internet
                        </span>
                        <svg width="12" height="18" viewBox="0 0 12 18">
                            <path d="M9 8h2v2H9zM9 12h2v2H9zM9 16h2v2H9zM5 12h2v2H5zM5 16h2v2H5zM1 16h2v2H1z" fill="#b8b4a0" />
                        </svg>
                    </div>
                </footer>
            </div>
        </div>
    );
}
